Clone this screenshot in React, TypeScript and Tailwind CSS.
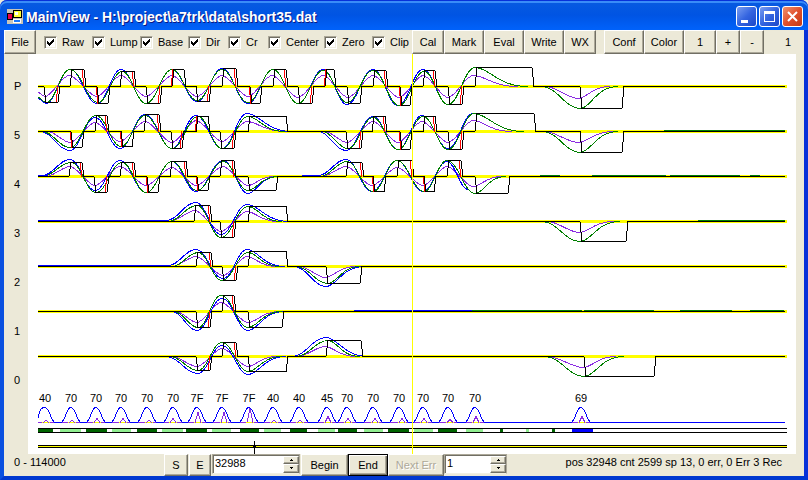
import { useState } from "react";
import type { ReactNode } from "react";
import clsx from "clsx";

// start x, end x, level (up is positive), red edge: "s" start, "e" end
type Pulse = [number, number, number, ("s" | "e")?];
// x and value; the curve is level at every knot
type Knot = [number, number];

interface Track {
  label: string;
  y: number;
  pulses: Pulse[];
  blue: Knot[][];
  green: Knot[][];
  purple: Knot[][];
  drift?: [number, number, string][];
}

const BLUE = "#0000ff";
const GREEN = "#007f00";
const PURPLE = "#8a2be2";

const TRACKS: Track[] = [
  {
    label: "P",
    y: 86,
    pulses: [
      [44, 58, -16, "e"], [70, 84, 17, "e"], [97, 108, -17, "s"], [120, 134, 15, "e"],
      [146, 160, -17, "e"], [172, 184, 17, "s"], [196, 209, -15, "e"], [222, 236, 18, "e"],
      [250, 260, -17, "s"], [273, 286, 17, "e"], [298, 312, -17, "e"], [325, 334, 17, "s"],
      [347, 360, -17], [373, 386, 16, "e"], [400, 410, -19, "s"], [423, 435, 16, "e"],
      [448, 462, -18, "e"], [475, 532, 19], [580, 622, -22],
    ],
    blue: [[[38, -12], [46, -17], [70, 17], [97, -17], [121, 17], [146, -17], [172, 17], [197, -15], [222, 18], [248, -17], [273, 17], [298, -17], [323, 17], [347, -18], [373, 17], [398, -19], [423, 17], [448, -18]]],
    green: [
      [[38, -11], [46, -16], [70, 17], [98, -16], [122, 15], [146, -17], [172, 17], [197, -14], [222, 17], [248, -16], [273, 17], [298, -17], [323, 16], [347, -16], [373, 16], [399, -19], [424, 15], [448, -18], [475, 19], [528, 0]],
      [[542, 0], [580, -22], [618, 0]],
    ],
    purple: [
      [[38, -6], [45, -10], [69, 11], [97, -10], [121, 11], [146, -10], [172, 11], [197, -10], [222, 11], [248, -10], [272, 11], [298, -11], [323, 11], [348, -11], [373, 11], [399, -11], [423, 11], [448, -11], [473, 11], [518, 0]],
      [[546, 0], [578, -12], [610, 0]],
    ],
  },
  {
    label: "5",
    y: 131,
    pulses: [
      [71, 82, -16, "s"], [95, 107, 16, "e"], [121, 132, -15, "s"], [144, 159, 17, "e"],
      [171, 182, -17, "e"], [196, 208, 15, "s"], [220, 234, -17, "e"], [248, 286, 15],
      [346, 361, -17, "e"], [372, 385, 15, "e"], [400, 410, -18, "s"], [423, 435, 15, "e"],
      [448, 462, -18, "e"], [475, 534, 18], [580, 622, -21],
    ],
    blue: [
      [[40, 0], [70, -19], [95, 14], [120, -17], [145, 17], [172, -17], [196, 16], [222, -17], [247, 18], [292, 0]],
      [[318, 0], [346, -19], [373, 15], [398, -18], [422, 16], [448, -17], [473, 18]],
    ],
    green: [
      [[42, 0], [70, -16], [96, 16], [121, -15], [145, 16], [172, -17], [198, 15], [222, -17], [248, 15], [285, 0]],
      [[322, 0], [348, -17], [373, 14], [398, -18], [423, 15], [448, -18], [474, 18], [524, 0]],
      [[543, 0], [580, -21], [618, 0]],
    ],
    purple: [
      [[48, 0], [70, -11], [95, 9], [120, -10], [145, 10], [172, -11], [196, 11], [222, -10], [247, 10], [285, 0]],
      [[325, 0], [347, -11], [373, 10], [398, -11], [422, 10], [448, -11], [473, 11], [512, 0]],
      [[545, 0], [578, -11], [614, 0]],
    ],
    drift: [[664, 785, GREEN]],
  },
  {
    label: "4",
    y: 176,
    pulses: [
      [69, 82, 14, "e"], [94, 107, -16, "e"], [120, 134, 14, "e"], [147, 158, -16, "s"],
      [170, 186, 15, "e"], [197, 208, -14, "s"], [220, 234, 16, "e"], [248, 276, -14],
      [346, 362, 14, "e"], [373, 384, -15, "s"], [397, 412, 16, "e"], [424, 434, -15, "s"],
      [447, 461, 16, "e"], [475, 508, -17],
    ],
    blue: [
      [[42, 1], [70, 17], [95, -14], [120, 16], [146, -16], [172, 15], [196, -15], [223, 16], [248, -17], [278, 0]],
      [[302, 1], [318, 1], [346, 17], [372, -15], [397, 16], [423, -15], [447, 15], [468, -13]],
    ],
    green: [
      [[42, 0], [71, 14], [96, -16], [122, 14], [146, -16], [172, 15], [197, -14], [223, 15], [248, -14], [278, 0]],
      [[320, 0], [347, 15], [373, -15], [397, 16], [424, -15], [447, 16], [475, -17], [506, 0]],
    ],
    purple: [
      [[46, 0], [70, 10], [95, -9], [120, 10], [146, -9], [172, 9], [196, -9], [223, 10], [248, -9], [274, 0]],
      [[322, 0], [346, 10], [372, -9], [397, 9], [423, -9], [447, 10], [473, -10], [502, 0]],
    ],
    drift: [[38, 48, BLUE], [540, 560, GREEN], [592, 666, GREEN], [670, 740, GREEN], [750, 760, GREEN]],
  },
  {
    label: "3",
    y: 221,
    pulses: [[194, 210, 16, "e"], [220, 234, -16, "e"], [248, 286, 15], [580, 626, -20]],
    blue: [[[166, 1], [196, 19], [221, -13], [247, 17], [290, 0]]],
    green: [[[168, 0], [197, 16], [221, -16], [248, 15], [282, 0]], [[542, 0], [580, -20], [620, 0]]],
    purple: [[[170, 0], [195, 11], [221, -10], [247, 10], [278, 0]], [[548, 0], [579, -11], [614, 0]]],
    drift: [[38, 166, BLUE], [698, 785, GREEN]],
  },
  {
    label: "2",
    y: 266,
    pulses: [[196, 211, 14, "e"], [222, 236, -14, "e"], [248, 286, 15], [326, 360, -17]],
    blue: [[[168, 1], [196, 17], [223, -12], [247, 17], [285, 0]], [[294, 0], [326, -20], [364, 0]]],
    green: [[[172, 0], [198, 14], [222, -14], [248, 14], [280, 0]], [[296, 0], [328, -17], [360, 0]]],
    purple: [[[172, 0], [196, 10], [223, -9], [247, 10], [276, 0]], [[300, 0], [325, -11], [356, 0]]],
    drift: [[38, 168, BLUE]],
  },
  {
    label: "1",
    y: 311,
    pulses: [[196, 210, -16, "e"], [222, 234, 16, "e"], [248, 282, -16]],
    blue: [[[172, 0], [197, -19], [222, 13], [248, -19], [284, 0]]],
    green: [[[174, 0], [198, -16], [221, 16], [248, -16], [282, 0]]],
    purple: [[[176, 0], [197, -11], [221, 9], [248, -11], [280, 0]]],
    drift: [[354, 472, BLUE], [472, 582, GREEN], [584, 654, GREEN], [680, 732, GREEN], [750, 784, GREEN]],
  },
  {
    label: "0",
    y: 356,
    pulses: [[196, 210, -14, "e"], [222, 236, 14, "e"], [248, 286, -15], [326, 361, 16], [584, 654, -20]],
    blue: [[[166, 0], [198, -17], [222, 11], [248, -18], [286, 0]], [[292, 0], [326, 19], [368, 0]]],
    green: [[[170, 0], [198, -14], [222, 14], [248, -15], [282, 0]], [[296, 0], [328, 16], [360, 0]], [[545, 0], [584, -20], [624, 0]]],
    purple: [[[172, 0], [197, -10], [222, 8], [248, -10], [276, 0]], [[298, 0], [325, 10], [356, 0]], [[548, 0], [583, -11], [616, 0]]],
  },
];

// text, peak x, then the small purple spike: x and height
const CODES: [string, number, number, number][] = [
  ["40", 45, 46, 2], ["70", 71, 72, 2], ["70", 96, 97, 4], ["70", 121, 123, 4],
  ["70", 147, 149, 2], ["70", 173, 173, 4], ["7F", 197, 198, 10], ["7F", 222, 224, 10],
  ["7F", 249, 250, 14], ["40", 273, 274, 2], ["40", 299, 300, 2], ["45", 327, 328, 6],
  ["70", 347, 348, 4], ["70", 373, 375, 4], ["70", 399, 402, 4], ["70", 423, 424, 4],
  ["70", 448, 450, 3], ["70", 475, 476, 6], ["69", 581, 582, 6],
];

const BARS: [number, number][] = [
  [38, 53], [60, 81], [86, 107], [112, 131], [137, 157], [162, 183], [186, 207], [212, 231],
  [240, 259], [264, 281], [290, 307], [318, 335], [338, 357], [364, 383], [388, 409], [414, 433],
  [438, 457], [466, 483], [500, 503], [526, 529], [552, 555], [572, 593],
];

const OPTIONS = [
  { name: "Raw", width: "w-12" },
  { name: "Lump", width: "w-12" },
  { name: "Base", width: "w-12" },
  { name: "Dir", width: "w-10" },
  { name: "Cr", width: "w-10" },
  { name: "Center", width: "w-14" },
  { name: "Zero", width: "w-12" },
  { name: "Clip", width: "w-10" },
];

const raised =
  "border border-t-white border-l-white border-r-[#716f64] border-b-[#716f64] shadow-[inset_-1px_-1px_0_#aca899]";

function curve(knots: Knot[], y: number, ease: number) {
  return knots
    .map(([x, v], i) => {
      if (i === 0) return `M${x} ${y - v}`;
      const [px, pv] = knots[i - 1];
      const d = x - px;
      // a decay to the baseline drops early and has a long tail
      const a = d * (v === 0 ? 0.28 : ease);
      const b = d * (v === 0 ? 0.58 : ease);
      return `C${px + a} ${y - pv} ${x - b} ${y - v} ${x} ${y - v}`;
    })
    .join("");
}

function square(pulses: Pulse[], y: number) {
  const steps = pulses.map(([a, b, v]) => `L${a} ${y}L${a + 2} ${y - v}L${b} ${y - v}L${b + 2} ${y}`);
  return `M38 ${y}${steps.join("")}L785 ${y}`;
}

function redEdge([a, b, v, side]: Pulse, y: number) {
  return side === "s" ? `M${a - 1} ${y}L${a + 1} ${y - v}` : `M${b - 2} ${y - v}L${b} ${y}`;
}

function barColor(i: number) {
  if (i === BARS.length - 1) return BLUE;
  return i % 2 === 0 ? "#006400" : "#90ee90";
}

function TrackPlot({ track }: { track: Track }) {
  const { y } = track;
  return (
    <g>
      <path d={`M38 ${y}H787`} stroke="#ffff00" strokeWidth={3} />
      {track.purple.map((k, i) => (
        <path key={i} d={curve(k, y, 0.3)} stroke={PURPLE} />
      ))}
      {track.blue.map((k, i) => (
        <path key={i} d={curve(k, y, 0.4)} stroke={BLUE} />
      ))}
      {track.green.map((k, i) => (
        <path key={i} d={curve(k, y, 0.4)} stroke={GREEN} />
      ))}
      {track.drift?.map(([a, b, color]) => (
        <path key={a} d={`M${a} ${y - 1}H${b}`} stroke={color} />
      ))}
      {track.pulses.filter((p) => p[3]).map((p) => (
        <path key={p[0]} d={redEdge(p, y)} stroke="#ff0000" />
      ))}
      <path d={square(track.pulses, y)} stroke="#000000" />
    </g>
  );
}

function Waveforms() {
  return (
    <svg className="block h-[400px] min-w-0 flex-1 bg-white" shapeRendering="crispEdges" fill="none">
      <g transform="translate(-28 -53.5)">
        {TRACKS.map((t) => (
          <TrackPlot key={t.label} track={t} />
        ))}

        <path d="M38 422H785" stroke={BLUE} />
        {CODES.map(([text, x, sx, h]) => (
          <g key={x}>
            <path d={`M${Math.max(x - 9, 38)} 422H${x + 9}`} stroke={PURPLE} />
            <path d={`M${sx - 4} 422H${sx + 4}`} stroke="#ffff00" />
            <path d={`M${sx - 3} 422L${sx} ${422 - h}L${sx + 3} 422`} stroke={PURPLE} />
            <path
              d={`M${Math.max(x - 10, 38)} ${x < 50 ? 417 : 422}C${x - 5} ${x < 50 ? 411 : 420} ${x - 5} 407 ${x} 407C${x + 5} 407 ${x + 5} 420 ${x + 10} 422`}
              stroke={BLUE}
            />
            <text x={x} y={401} textAnchor="middle" fill="#000000" fontSize={11}>
              {text}
            </text>
          </g>
        ))}

        {BARS.map(([a, b], i) => (
          <path key={a} d={`M${a} 430H${b}`} stroke={barColor(i)} strokeWidth={3} />
        ))}
        <path d="M38 428H787M38 432H787" stroke="#000000" />
        <path d="M38 446H787" stroke="#000000" strokeWidth={3} />
        <path d="M38 446H787" stroke="#ffff00" />
        <path d="M254.500 440V453M253 446H256" stroke="#000000" />
        <path d="M412.500 53V455" stroke="#ffff00" />
      </g>
    </svg>
  );
}

function TitleButton({ label, close, children }: { label: string; close?: boolean; children: ReactNode }) {
  return (
    <button
      aria-label={label}
      className={clsx(
        "h-[21px] w-[21px] rounded-[3px] border border-white bg-linear-to-br",
        close ? "from-[#f0906c] via-[#e0502c] to-[#c43a14]" : "from-[#7a9cf0] via-[#3464e0] to-[#1c48c8]",
      )}
    >
      <svg viewBox="0 0 19 19" className="block h-full w-full" fill="none" stroke="#ffffff" shapeRendering="crispEdges">
        {children}
      </svg>
    </button>
  );
}

function TitleBar() {
  return (
    <header className="flex h-[30px] items-center rounded-t-[7px] bg-linear-to-b from-[#0a5be0] via-[#0054e3] to-[#0062fb] pt-[3px] pl-[7px] pr-[5px] shadow-[inset_0_1px_0_#0831d9,inset_0_3px_0_#3a8cf8]">
      <svg viewBox="0 0 16 16" className="h-4 w-4" shapeRendering="crispEdges">
        <path fill="#c8c4b8" d="M0 0h16v15H0z" />
        <path fill="#000000" d="M0 4h6v7H0zM6 1h9v8H6zM6 10h8v4H6z" />
        <path fill="#e8004c" d="M1 5h4v5H1z" />
        <path fill="#ffff30" d="M7 2h7v6H7z" />
        <path fill="#ffffff" d="M8 3h3v3H8zM6 10h8v4H6z" />
        <path fill="#1878ff" d="M7 11h6v2H7z" />
      </svg>
      <h1 className="ml-[3px] flex-1 truncate text-[14px] leading-5 font-bold text-white [text-shadow:1px_1px_0_#0a1883]">
        MainView - H:\project\a7trk\data\short35.dat
      </h1>
      <div className="flex gap-[2px]">
        <TitleButton label="Minimize">
          <path d="M4 14H11" strokeWidth={3} />
        </TitleButton>
        <TitleButton label="Maximize">
          <path d="M4 5H15" strokeWidth={3} />
          <path d="M4.500 4V14.500H14.500V4" />
        </TitleButton>
        <TitleButton label="Close" close>
          <path d="M5 5L14 14M14 5L5 14" strokeWidth={2} shapeRendering="auto" />
        </TitleButton>
      </div>
    </header>
  );
}

function ToolButton({ width, children }: { width: string; children: ReactNode }) {
  return <button className={clsx("h-6 bg-[#ece9d8] text-center", raised, width)}>{children}</button>;
}

function Option({ name, width }: { name: string; width: string }) {
  const [checked, setChecked] = useState(true);
  return (
    <label className={clsx("flex shrink-0 items-center gap-[5px] whitespace-nowrap", width)}>
      <span className="relative h-[13px] w-[13px] shrink-0">
        <input
          type="checkbox"
          checked={checked}
          onChange={(e) => setChecked(e.target.checked)}
          className="peer block h-[13px] w-[13px] appearance-none border border-t-[#aca899] border-l-[#aca899] border-r-white border-b-white bg-white shadow-[inset_1px_1px_0_#716f64,inset_-1px_-1px_0_#f1efe2]"
        />
        <svg
          viewBox="0 0 13 13"
          className="pointer-events-none absolute inset-0 hidden h-[13px] w-[13px] peer-checked:block"
          shapeRendering="crispEdges"
        >
          <path d="M3 5h1v1h1v1h1v-1h1v-1h1v-1h1v-1h1v3h-1v1h-1v1h-1v1h-1v1h-1v-1h-1v-1h-1z" />
        </svg>
      </span>
      {name}
    </label>
  );
}

function Toolbar() {
  return (
    <div className="flex h-6 items-center bg-[#ece9d8]">
      <ToolButton width="w-8">File</ToolButton>
      <div className="ml-2 flex">
        {OPTIONS.map((o) => (
          <Option key={o.name} {...o} />
        ))}
      </div>
      <ToolButton width="w-8">Cal</ToolButton>
      <ToolButton width="w-10">Mark</ToolButton>
      <ToolButton width="w-10">Eval</ToolButton>
      <ToolButton width="w-10">Write</ToolButton>
      <ToolButton width="w-8">WX</ToolButton>
      <div className="ml-2 flex">
        <ToolButton width="w-10">Conf</ToolButton>
        <ToolButton width="w-10">Color</ToolButton>
        <ToolButton width="w-8">1</ToolButton>
        <ToolButton width="w-6">+</ToolButton>
        <ToolButton width="w-6">-</ToolButton>
      </div>
      <span className="ml-auto pr-[13px]">1</span>
    </div>
  );
}

function Spinner({ label, value, width }: { label: string; value: string; width: string }) {
  const [text, setText] = useState(value);
  const step = (n: number) => setText(String(Number(text) + n));
  return (
    <div
      className={clsx(
        "flex h-5 border border-t-[#aca899] border-l-[#aca899] border-r-[#aca899] border-b-[#f1efe2] bg-white shadow-[inset_1px_1px_0_#716f64]",
        width,
      )}
    >
      <input
        aria-label={label}
        value={text}
        onChange={(e) => setText(e.target.value)}
        className="min-w-0 flex-1 bg-transparent pl-[2px] pb-[2px] outline-none"
      />
      <div className="mt-px flex w-4 flex-col">
        <button aria-label={`${label} up`} onClick={() => step(1)} className={clsx("flex h-2 items-center justify-center bg-[#ece9d8]", raised)}>
          <svg viewBox="0 0 5 3" className="h-[3px] w-[5px]" shapeRendering="crispEdges">
            <path d="M2 0h1v1h1v1h-3v-1h1z" />
          </svg>
        </button>
        <button aria-label={`${label} down`} onClick={() => step(-1)} className={clsx("flex h-[9px] items-center justify-center bg-[#ece9d8]", raised)}>
          <svg viewBox="0 0 5 3" className="h-[3px] w-[5px]" shapeRendering="crispEdges">
            <path d="M1 0h3v1h-1v1h-1v-1h-1z" />
          </svg>
        </button>
      </div>
    </div>
  );
}

function BottomBar() {
  return (
    <footer className="flex h-[22px] bg-[#ece9d8]">
      <span className="w-[160px] pl-[10px] leading-4">0 - 114000</span>
      <div className="flex gap-px">
        <button className={clsx("h-[22px] w-6", raised)}>S</button>
        <button className={clsx("h-[22px] w-[22px]", raised)}>E</button>
        <Spinner label="Position" value="32988" width="w-[88px]" />
        <button className={clsx("h-[22px] w-[47px]", raised)}>Begin</button>
      </div>
      <button className="h-[22px] w-10 border border-black shadow-[inset_1px_1px_0_#ffffff,inset_-1px_-1px_0_#716f64,inset_-2px_-2px_0_#aca899]">
        End
      </button>
      <button disabled className={clsx("h-[22px] w-14 text-[#aca899] [text-shadow:1px_1px_0_#ffffff]", raised)}>
        Next Err
      </button>
      <Spinner label="Record" value="1" width="w-[63px]" />
      <span className="ml-auto pr-[22px] leading-4">pos 32948 cnt 2599 sp 13, 0 err, 0 Err 3 Rec</span>
    </footer>
  );
}

export default function App() {
  return (
    <div className="bg-[#ece9d8] font-['Liberation_Sans',Arial,sans-serif] text-[11px] leading-4 text-black">
      <TitleBar />
      <main className="border-x-4 border-b-4 border-r-[#0831d9] border-b-[#0038d0] border-l-[#0a50e0] shadow-[inset_1px_0_0_#0019cf]">
        <Toolbar />
        <div className="flex bg-[#ece9d8]">
          <div className="flex w-6 flex-col pt-6 pl-[10px]">
            {TRACKS.map((t) => (
              <span key={t.label} className="h-[49px]">
                {t.label}
              </span>
            ))}
          </div>
          <Waveforms />
          <div className="w-2" />
        </div>
        <BottomBar />
      </main>
    </div>
  );
}
